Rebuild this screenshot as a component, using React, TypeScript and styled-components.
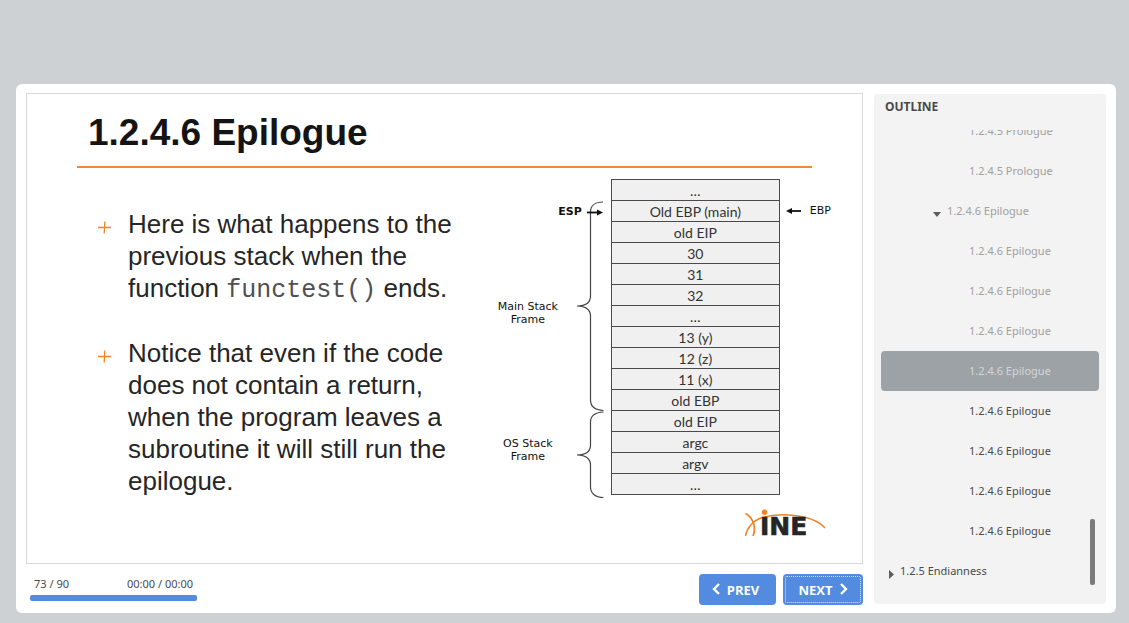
import React from "react";
import styled, { createGlobalStyle } from "styled-components";

const GlobalStyle = createGlobalStyle`
  * { box-sizing: border-box; }
  body {
    margin: 0;
    background: #cdd1d4;
    font-family: "Noto Sans", "Open Sans", sans-serif;
    color: #4a4a4a;
  }
`;

const Player = styled.div`
  display: flex;
  gap: 11px;
  margin: 84px 13px 10px 16px;
  padding: 9px 10px 8px;
  background: #fff;
  border-radius: 6px;
`;

const Stage = styled.main`
  flex: 1;
  min-width: 0;
  display: flex;
  flex-direction: column;
  gap: 10px;
`;

const Slide = styled.section`
  flex: 1;
  border: 1px solid #d9d9d9;
  padding-top: 17px;
  color: #262626;
  font-family: "Liberation Sans", Arial, sans-serif;
`;

const SlideTitle = styled.h1`
  margin: 0 50px;
  padding: 0 11px 11px;
  border-bottom: 2px solid #f08a33;
  font-size: 37px;
  line-height: 44px;
  color: #141414;
`;

const SlideBody = styled.div`
  display: grid;
  grid-template-columns: minmax(0, 1fr) auto;
  gap: 12px;
  padding: 11px 31px 0 71px;
`;

const BulletList = styled.ul`
  display: flex;
  flex-direction: column;
  gap: 33px;
  margin: 0;
  padding: 29px 0 0;
  list-style: none;
`;

const Bullet = styled.li`
  display: flex;
  gap: 17px;
  font-size: 26px;
  line-height: 32px;
`;

const PlusMark = styled.svg`
  flex: none;
  width: 13px;
  height: 13px;
  margin-top: 13px;
  stroke: #f58220;
`;

const Code = styled.code`
  font-family: "Liberation Mono", "Courier New", monospace;
  font-size: 25px;
  line-height: 24px;
  color: #505050;
`;

const Diagram = styled.div`
  display: flex;
  font-family: "DejaVu Sans", Verdana, sans-serif;
  font-size: 11px;
  line-height: 13px;
  color: #111;
`;

const LabelColumn = styled.div`
  display: flex;
  flex-direction: column;
  align-items: flex-start;
  width: 87px;
  padding-top: 26px;
`;

const PointerLabel = styled.strong`
  align-self: flex-end;
`;

const FrameLabel = styled.span<{ $gap: number }>`
  width: 66px;
  margin-top: ${(p) => p.$gap}px;
  text-align: center;
`;

const Braces = styled.svg`
  width: 30px;
  height: 322px;
  margin: 0 4px 0 -5px;
`;

const StackTable = styled.table`
  width: 169px;
  border-collapse: collapse;
  align-self: flex-start;
  font-family: Lato, "Century Gothic", sans-serif;
  font-size: 14px;
  color: #333;
`;

const StackCell = styled.td`
  height: 21px;
  padding: 2px 0 0;
  border: 1px solid #4a4a4a;
  background: #f0f0f0;
  line-height: 18px;
  text-align: center;
`;

const BasePointer = styled.div`
  display: flex;
  align-items: center;
  align-self: flex-start;
  gap: 8px;
  padding: 25px 0 0 6px;
`;

const LogoRow = styled.div`
  display: flex;
  justify-content: flex-end;
  padding: 8px 36px 24px 0;
`;

const Controls = styled.div`
  display: flex;
  justify-content: space-between;
  align-items: flex-start;
  padding-left: 4px;
`;

const Status = styled.div`
  width: 167px;
`;

const StatusText = styled.div`
  display: flex;
  justify-content: space-between;
  padding: 2px 4px 3px;
  font-size: 11px;
  line-height: 16px;
`;

const Track = styled.div`
  height: 6px;
  border-radius: 2px;
  background: #528be0;
`;

const ButtonGroup = styled.div`
  display: flex;
  gap: 7px;
`;

const NavButton = styled.button<{ $focused?: boolean }>`
  display: flex;
  align-items: center;
  justify-content: center;
  gap: 7px;
  width: ${(p) => (p.$focused ? 80 : 77)}px;
  height: 31px;
  padding: 1px ${(p) => (p.$focused ? 0 : 4)}px 0 0;
  border: 0;
  border-radius: 4px;
  background: #528be0;
  color: #fff;
  font: 700 13px/20px "Open Sans", sans-serif;
  outline: ${(p) => (p.$focused ? "1px dotted #d5e3f8" : "none")};
  outline-offset: -3px;

  svg {
    margin-bottom: 3px;
  }
`;

const Sidebar = styled.aside`
  position: relative;
  width: 232px;
  margin: 1px 0;
  border-radius: 4px;
  background: #f3f3f3;
`;

const SidebarTitle = styled.h2`
  margin: 0;
  padding: 5px 11px 15px;
  font-size: 12px;
  line-height: 16px;
`;

const OutlineList = styled.ul`
  display: flex;
  flex-direction: column;
  justify-content: flex-end;
  height: calc(100vh - 162px);
  margin: 0;
  padding: 0 7px;
  list-style: none;
  overflow: hidden;
`;

type RowState = "seen" | "current" | "unseen";

const rowColor: Record<RowState, string> = {
  seen: "#a0a0a0",
  current: "#d3d6d8",
  unseen: "#4a4a4a",
};

const OutlineRow = styled.li<{ $level: number; $state: RowState }>`
  flex: none;
  display: flex;
  align-items: center;
  gap: 6px;
  height: 40px;
  padding-left: ${(p) => [8, 52, 88][p.$level]}px;
  border-radius: 4px;
  background: ${(p) => (p.$state === "current" ? "#9da2a6" : "transparent")};
  color: ${(p) => rowColor[p.$state]};
  font-size: 11px;
  line-height: 16px;

  svg {
    flex: none;
    margin-top: 6px;
    fill: #5c5c5c;
  }
`;

const OutlineLink = styled.a`
  color: inherit;
  text-decoration: none;
`;

const ScrollThumb = styled.div`
  position: absolute;
  right: 11px;
  bottom: 19px;
  width: 5px;
  height: 66px;
  border-radius: 2px;
  background: #7b7b7b;
`;

const stack = [
  "…", "Old EBP (main)", "old EIP", "30", "31", "32", "…", "13 (y)",
  "12 (z)", "11 (x)", "old EBP", "old EIP", "argc", "argv", "…",
];

const outline: { text: string; level: number; state: RowState; open?: boolean }[] = [
  { text: "1.2.4.5 Prologue", level: 2, state: "seen" },
  { text: "1.2.4.5 Prologue", level: 2, state: "seen" },
  { text: "1.2.4.6 Epilogue", level: 1, state: "seen", open: true },
  { text: "1.2.4.6 Epilogue", level: 2, state: "seen" },
  { text: "1.2.4.6 Epilogue", level: 2, state: "seen" },
  { text: "1.2.4.6 Epilogue", level: 2, state: "seen" },
  { text: "1.2.4.6 Epilogue", level: 2, state: "current" },
  { text: "1.2.4.6 Epilogue", level: 2, state: "unseen" },
  { text: "1.2.4.6 Epilogue", level: 2, state: "unseen" },
  { text: "1.2.4.6 Epilogue", level: 2, state: "unseen" },
  { text: "1.2.4.6 Epilogue", level: 2, state: "unseen" },
  { text: "1.2.5 Endianness", level: 0, state: "unseen", open: false },
];

const Plus = () => (
  <PlusMark viewBox="0 0 13 13" aria-hidden="true">
    <path d="M0 6.5H13M6.8 0.5L6.2 12.5" strokeWidth="1.3" fill="none" />
  </PlusMark>
);

const Twisty = ({ open }: { open: boolean }) =>
  open ? (
    <svg width="8" height="5" viewBox="0 0 8 5" aria-hidden="true">
      <path d="M0 0H8L4 5Z" />
    </svg>
  ) : (
    <svg width="5" height="9" viewBox="0 0 5 9" aria-hidden="true">
      <path d="M0 0L5 4.5L0 9Z" />
    </svg>
  );

const Chevron = ({ d }: { d: string }) => (
  <svg width="8" height="12" viewBox="0 0 8 12" aria-hidden="true">
    <path d={d} fill="none" stroke="#fff" strokeWidth="2.4" />
  </svg>
);

const Logo = () => (
  <svg width="82" height="30" viewBox="0 0 82 30" role="img" aria-label="INE">
    <g fill="none" stroke="#f08226">
      <path d="M1.500 27C2.500 20 8 12 18 8.500C34 4 68 4 81 19" strokeWidth="1.400" />
      <path d="M1.500 4.500C8 8 13 17 9 27" strokeWidth="1.700" />
    </g>
    <text x="16" y="26" fontFamily="DejaVu Sans" fontWeight="700" fontSize="25" fill="#262626" stroke="#262626" strokeWidth="0.600">INE</text>
    <circle cx="20.500" cy="3.200" r="2.700" fill="#f58220" />
  </svg>
);

export default function App() {
  return (
    <>
      <GlobalStyle />
      <Player>
        <Stage>
          <Slide>
            <SlideTitle>1.2.4.6 Epilogue</SlideTitle>
            <SlideBody>
              <BulletList>
                <Bullet>
                  <Plus />
                  <span>
                    Here is what happens to the previous stack when the function{" "}
                    <Code>functest()</Code> ends.
                  </span>
                </Bullet>
                <Bullet>
                  <Plus />
                  <span>
                    Notice that even if the code does not contain a return, when the
                    program leaves a subroutine it will still run the epilogue.
                  </span>
                </Bullet>
              </BulletList>
              <Diagram>
                <LabelColumn>
                  <PointerLabel>ESP</PointerLabel>
                  <FrameLabel $gap={82}>Main Stack Frame</FrameLabel>
                  <FrameLabel $gap={111}>OS Stack Frame</FrameLabel>
                </LabelColumn>
                <Braces viewBox="0 0 30 322" aria-hidden="true">
                  <g fill="none" stroke="#444" strokeWidth="1.2">
                    <path d="M26 23C18 23 13.500 27 13.500 33V117C13.500 123 9 127 0 127C9 127 13.500 131 13.500 137V221C13.500 227 18 231 26.500 231.500" />
                    <path d="M26.500 233C18 233.500 13.500 237 13.500 243V266C13.500 272 9 276 0 276C9 276 13.500 280 13.500 286V308C13.500 314 18 318.500 26.500 318.500" />
                  </g>
                  <path d="M10 33.500H21" stroke="#111" strokeWidth="1.800" />
                  <path d="M20 30.500L26 33.500L20 36.500Z" fill="#111" />
                </Braces>
                <StackTable>
                  <tbody>
                    {stack.map((value, i) => (
                      <tr key={i}>
                        <StackCell>{value}</StackCell>
                      </tr>
                    ))}
                  </tbody>
                </StackTable>
                <BasePointer>
                  <svg width="16" height="8" viewBox="0 0 16 8" aria-hidden="true">
                    <path d="M5 4H15" stroke="#111" strokeWidth="1.800" />
                    <path d="M6 1L0 4L6 7Z" fill="#111" />
                  </svg>
                  <span>EBP</span>
                </BasePointer>
              </Diagram>
            </SlideBody>
            <LogoRow>
              <Logo />
            </LogoRow>
          </Slide>
          <Controls>
            <Status>
              <StatusText>
                <span>73 / 90</span>
                <span>00:00 / 00:00</span>
              </StatusText>
              <Track />
            </Status>
            <ButtonGroup>
              <NavButton type="button">
                <Chevron d="M7 1L2 6L7 11" />
                PREV
              </NavButton>
              <NavButton type="button" $focused>
                NEXT
                <Chevron d="M1 1L6 6L1 11" />
              </NavButton>
            </ButtonGroup>
          </Controls>
        </Stage>
        <Sidebar>
          <SidebarTitle>OUTLINE</SidebarTitle>
          <OutlineList>
            {outline.map((item, i) => (
              <OutlineRow key={i} $level={item.level} $state={item.state}>
                {item.open !== undefined && <Twisty open={item.open} />}
                <OutlineLink href="#">{item.text}</OutlineLink>
              </OutlineRow>
            ))}
          </OutlineList>
          <ScrollThumb />
        </Sidebar>
      </Player>
    </>
  );
}
